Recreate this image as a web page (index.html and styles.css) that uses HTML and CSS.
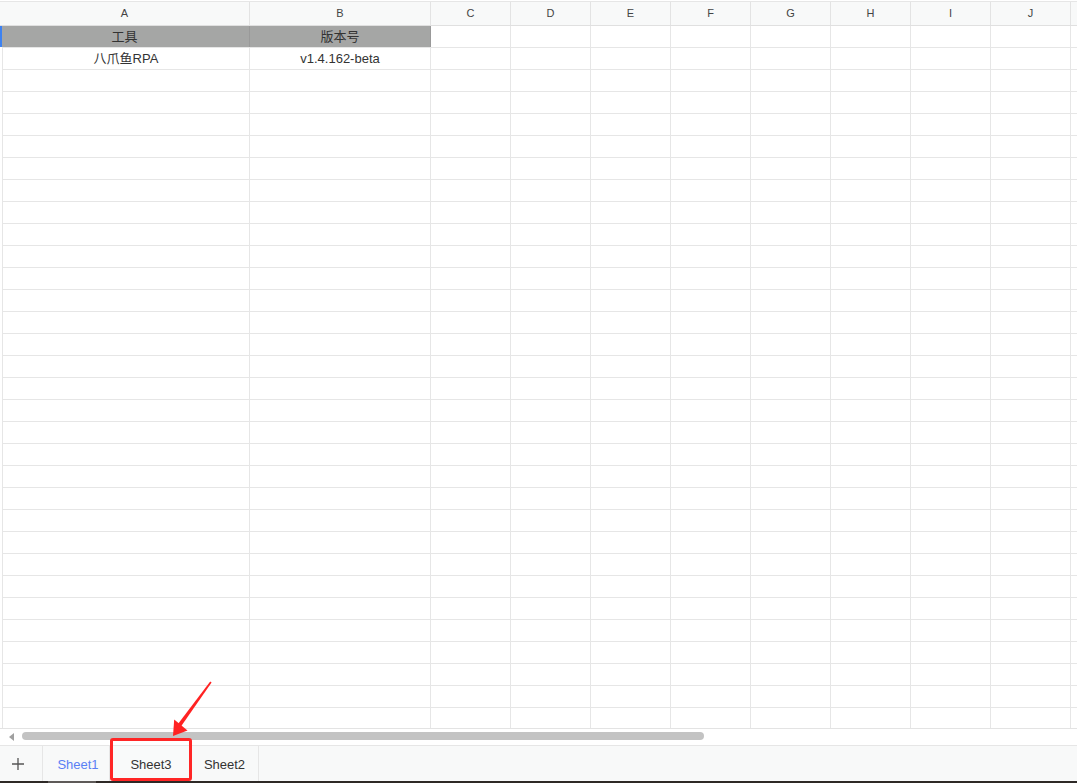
FILE: index.html
```html
<!DOCTYPE html>
<html lang="zh-CN">
<head>
    <meta charset="UTF-8">
    <meta name="viewport" content="width=device-width, initial-scale=1.0">
    <title>Sheet</title>
    <link rel="stylesheet" href="styles.css">
</head>
<body>
    <div class="sheet">
        <div class="grid">
            <div class="col-head">
                <div class="ch col-a">A</div>
                <div class="ch col-b">B</div>
                <div class="ch">C</div>
                <div class="ch">D</div>
                <div class="ch">E</div>
                <div class="ch">F</div>
                <div class="ch">G</div>
                <div class="ch">H</div>
                <div class="ch">I</div>
                <div class="ch">J</div>
                <div class="ch"></div>
            </div>
            <div class="rows" id="rows">
                <div class="row">
                    <div class="cell col-a title selected">工具</div>
                    <div class="cell col-b title">版本号</div>
                    <div class="cell"></div><div class="cell"></div><div class="cell"></div><div class="cell"></div>
                    <div class="cell"></div><div class="cell"></div><div class="cell"></div><div class="cell"></div><div class="cell"></div>
                </div>
                <div class="row">
                    <div class="cell col-a">八爪鱼RPA</div>
                    <div class="cell col-b">v1.4.162-beta</div>
                    <div class="cell"></div><div class="cell"></div><div class="cell"></div><div class="cell"></div>
                    <div class="cell"></div><div class="cell"></div><div class="cell"></div><div class="cell"></div><div class="cell"></div>
                </div>
            </div>
        </div>

        <div class="hscroll">
            <span class="arrow-left"></span>
            <div class="thumb"></div>
        </div>

        <div class="tabbar">
            <div class="add-tab">
                <svg width="14" height="14" viewBox="0 0 14 14"><path d="M7 1v12M1 7h12" stroke="#555" stroke-width="1.3"/></svg>
            </div>
            <div class="tab active">Sheet1</div>
            <div class="tab wide">Sheet3</div>
            <div class="tab">Sheet2</div>
        </div>

        <div class="statusline"><span class="seg"></span></div>

        <div class="mark-box"></div>
        <svg class="mark-arrow" width="1077" height="783" viewBox="0 0 1077 783">
            <polygon points="210.2,681.6 211.6,682.6 180.6,727 177.4,724.8" fill="#ff2222"/>
            <polygon points="173,736 174.2,719.5 187.5,730.5" fill="#ff2222"/>
        </svg>
    </div>

    <script>
        // fill the empty rows below the data
        var rows = document.getElementById('rows');
        for (var i = 0; i < 30; i++) {
            var row = document.createElement('div');
            row.className = 'row';
            var html = '<div class="cell col-a"></div><div class="cell col-b"></div>';
            for (var j = 0; j < 9; j++) {
                html += '<div class="cell"></div>';
            }
            row.innerHTML = html;
            rows.appendChild(row);
        }
    </script>
</body>
</html>
```

FILE: styles.css
```css
body {
    margin: 0;
    font-family: "Liberation Sans", "Noto Sans CJK SC", sans-serif;
    color: #333;
    background: #fff;
    overflow: hidden;
}

.sheet {
    position: relative;
    width: 1077px;
    height: 783px;
    overflow: hidden;
}

.grid {
    height: 727px;
    border-bottom: 1px solid #e3e3e3;
    overflow: hidden;
    padding-top: 1px;
}

.col-head {
    display: flex;
    height: 23px;
    background: #f8f9f9;
    border-top: 1px solid #e6e6e6;
    border-bottom: 1px solid #e0e0e0;
}

.ch {
    flex: 0 0 80px;
    box-sizing: border-box;
    border-right: 1px solid #e3e3e3;
    font-size: 11px;
    line-height: 23px;
    text-align: center;
    color: #444;
}

.ch.col-a {
    flex-basis: 250px;
}

.ch.col-b {
    flex-basis: 181px;
}

.rows {
    margin-left: 2px;
    border-left: 1px solid #e6e6e6;
}

.row {
    display: flex;
    height: 21px;
    border-bottom: 1px solid #e6e6e6;
}

.cell {
    flex: 0 0 80px;
    box-sizing: border-box;
    border-right: 1px solid #e6e6e6;
    font-size: 13px;
    line-height: 21px;
    text-align: center;
    color: #333;
    white-space: nowrap;
}

.cell.col-a {
    flex-basis: 247px;
}

.cell.col-b {
    flex-basis: 181px;
}

.cell.title {
    background: #a5a6a5;
    border-right-color: #999;
}

.cell.selected {
    box-shadow: inset 2px 0 0 #3d82f2;
    margin-left: -3px;
    flex-basis: 250px;
}

.hscroll {
    position: relative;
    height: 16px;
    border-bottom: 1px solid #e6e6e6;
}

.arrow-left {
    position: absolute;
    left: 9px;
    top: 4px;
    width: 0;
    height: 0;
    border-top: 4px solid transparent;
    border-bottom: 4px solid transparent;
    border-right: 5px solid #a0a0a0;
}

.thumb {
    position: absolute;
    left: 22px;
    top: 3px;
    width: 682px;
    height: 8px;
    border-radius: 4px;
    background: #c3c3c3;
}

.tabbar {
    display: flex;
    height: 35px;
    background: #f8f9f9;
}

.add-tab {
    display: flex;
    align-items: center;
    justify-content: center;
    border-right: 1px solid #e6e6e6;
    padding-right: 6px;
    box-sizing: border-box;
    width: 43px;
}

.tab {
    box-sizing: border-box;
    width: 68px;
    text-align: center;
    font-size: 13px;
    line-height: 37px;
    color: #333;
    border-right: 1px solid #e6e6e6;
}

.tab.active {
    color: #5a7ff5;
    width: 67px;
    padding-left: 4px;
}

.tab.wide {
    width: 81px;
    padding-left: 2px;
    background: #f9fafa;
}

.statusline {
    height: 3px;
    background: #2e2926;
}

.statusline .seg {
    display: block;
    margin-left: 48px;
    width: 48px;
    height: 3px;
    background: #5e5a58;
}

.mark-box {
    position: absolute;
    left: 110px;
    top: 738px;
    width: 76px;
    height: 37px;
    border: 3px solid #ff2626;
    border-radius: 3px;
}

.mark-arrow {
    position: absolute;
    left: 0;
    top: 0;
    pointer-events: none;
}
```
